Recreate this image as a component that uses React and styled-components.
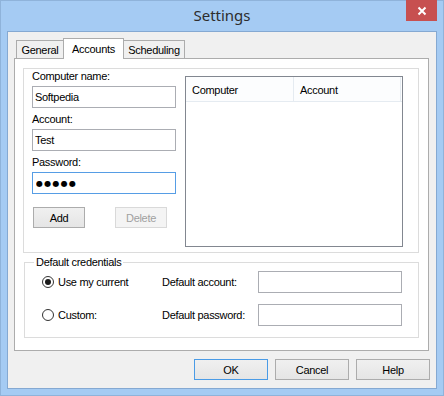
import React from "react";
import styled, { createGlobalStyle } from "styled-components";

const GlobalStyle = createGlobalStyle`
  html, body {
    margin: 0;
    padding: 0;
  }
  body {
    font-family: "Liberation Sans", Arial, sans-serif;
    font-size: 11px;
    letter-spacing: -0.3px;
    color: #000;
  }
`;

const Window = styled.div`
  width: 444px;
  height: 396px;
  box-sizing: border-box;
  background: #a5cbf3;
  border: 1px solid #8fb3da;
  display: flex;
  flex-direction: column;
`;

const TitleBar = styled.div`
  position: relative;
  height: 30px;
  display: flex;
  align-items: center;
  justify-content: center;
`;

const Title = styled.span`
  font-family: "Noto Sans", "Open Sans", sans-serif;
  font-size: 15px;
  letter-spacing: 0;
  color: #2d2d2d;
  margin-top: -2px;
`;

const CloseButton = styled.div`
  position: absolute;
  top: -1px;
  right: 6px;
  width: 31px;
  height: 21px;
  background: #c75050;
  display: flex;
  align-items: center;
  justify-content: center;
`;

const Client = styled.div`
  margin: 0 6px;
  height: 358px;
  box-sizing: border-box;
  border: 1px solid #85a9d2;
  background: #f0f0f0;
  padding: 6px 7px 0 6px;
  display: flex;
  flex-direction: column;
`;

const TabRow = styled.div`
  display: flex;
  align-items: flex-end;
  height: 20px;
  padding-left: 2px;
  position: relative;
  z-index: 1;
`;

const Tab = styled.div`
  width: ${(p) => p.$w}px;
  height: ${(p) => (p.$active ? 21 : 18)}px;
  margin-bottom: ${(p) => (p.$active ? -1 : 0)}px;
  margin-left: -1px;
  box-sizing: border-box;
  border: 1px solid #acacac;
  border-bottom: none;
  background: ${(p) => (p.$active ? "#fff" : "#f0f0f0")};
  text-align: center;
  line-height: 16px;
  padding-top: ${(p) => (p.$active ? 2 : 1)}px;
  &:first-child {
    margin-left: 0;
  }
`;

const Panel = styled.div`
  height: 293px;
  box-sizing: border-box;
  border: 1px solid #acacac;
  background: #fff;
  padding: 9px 9px 0 8px;
  display: flex;
  flex-direction: column;
`;

const AccountsGroup = styled.div`
  height: 185px;
  box-sizing: border-box;
  border: 1px solid #dcdcdc;
  padding: 7px 15px 0 8px;
  display: flex;
  gap: 9px;
  align-items: flex-start;
`;

const FieldColumn = styled.div`
  width: 144px;
  display: flex;
  flex-direction: column;
  margin-top: -7px;
`;

const Label = styled.label`
  display: block;
  line-height: 14px;
  margin: ${(p) => (p.$first ? 0 : 4)}px 0 3px;
  white-space: nowrap;
`;

const TextBox = styled.input`
  width: ${(p) => p.$w || 144}px;
  height: 22px;
  box-sizing: border-box;
  border: 1px solid ${(p) => (p.$focused ? "#569de5" : "#abadb3")};
  background: #fff;
  font-family: inherit;
  font-size: 11px;
  letter-spacing: -0.3px;
  padding: 0 2px;
  margin: 0;
  outline: none;
  color: #000;
`;

const PasswordBox = styled(TextBox)`
  font-family: "DejaVu Sans", sans-serif;
  font-size: 8px;
  letter-spacing: 1.3px;
  padding-left: 3px;
`;

const SmallButtons = styled.div`
  display: flex;
  gap: 30px;
  margin: 13px 0 0 1px;
`;

const Button = styled.button`
  width: ${(p) => p.$w}px;
  height: 21px;
  box-sizing: border-box;
  border: 1px solid ${(p) => (p.$default ? "#4a9be6" : p.disabled ? "#d9d9d9" : "#acacac")};
  background: ${(p) =>
    p.disabled ? "#f4f4f4" : "linear-gradient(#f0f0f0, #e5e5e5)"};
  color: ${(p) => (p.disabled ? "#a0a0a0" : "#000")};
  font-family: inherit;
  font-size: 11px;
  letter-spacing: -0.3px;
  padding: 0;
  margin: 0;
`;

const ListView = styled.div`
  width: 218px;
  height: 171px;
  box-sizing: border-box;
  border: 1px solid #828790;
  background: #fff;
`;

const ListHeader = styled.div`
  display: flex;
  height: 25px;
  box-sizing: border-box;
  border-bottom: 1px solid #e5ebf1;
  background: #fcfdfe;
`;

const Column = styled.div`
  width: ${(p) => p.$w}px;
  box-sizing: border-box;
  border-right: 1px solid #e5ebf1;
  padding: 6px 0 0 6px;
  line-height: 14px;
`;

const Credentials = styled.fieldset`
  height: 83px;
  box-sizing: border-box;
  margin: 2px 0 0 1px;
  padding: 2px 0 0 17px;
  border: 1px solid #dcdcdc;
  min-width: 0;
`;

const Legend = styled.legend`
  margin-left: -8px;
  padding: 0 2px;
  line-height: 14px;
`;

const CredGrid = styled.div`
  display: grid;
  grid-template-columns: 120px 96px 144px;
  grid-auto-rows: 22px;
  row-gap: 11px;
  align-items: center;
`;

const RadioLabel = styled.label`
  display: flex;
  align-items: center;
  gap: 4px;
  white-space: nowrap;
`;

const RadioCircle = styled.span`
  width: 12px;
  height: 12px;
  box-sizing: border-box;
  border-radius: 50%;
  border: 1px solid #333;
  background: #fff;
  display: flex;
  align-items: center;
  justify-content: center;
  margin-top: ${(p) => p.$dy || 0}px;
  &::after {
    content: "";
    width: 6px;
    height: 6px;
    border-radius: 50%;
    background: ${(p) => (p.$checked ? "#1a1a1a" : "transparent")};
  }
`;

const CredLabel = styled.span`
  white-space: nowrap;
  margin-top: ${(p) => p.$dy || 0}px;
`;

const Footer = styled.div`
  display: flex;
  justify-content: flex-end;
  gap: 7px;
  margin: 8px -1px 0 0;
`;

function Radio({ checked, children, dy }) {
  return (
    <RadioLabel>
      <RadioCircle $checked={checked} $dy={dy} />
      <CredLabel $dy={dy}>{children}</CredLabel>
    </RadioLabel>
  );
}

export default function App() {
  return (
    <>
      <GlobalStyle />
      <Window>
        <TitleBar>
          <Title>Settings</Title>
          <CloseButton>
            <svg width="10" height="10" viewBox="0 0 10 10">
              <path d="M1.5 1.5 L8.5 8.5 M8.5 1.5 L1.5 8.5" stroke="#fff" strokeWidth="2" />
            </svg>
          </CloseButton>
        </TitleBar>
        <Client>
          <TabRow>
            <Tab $w={48}>General</Tab>
            <Tab $w={61} $active>Accounts</Tab>
            <Tab $w={62}>Scheduling</Tab>
          </TabRow>
          <Panel>
            <AccountsGroup>
              <FieldColumn>
                <Label $first>Computer name:</Label>
                <TextBox readOnly defaultValue="Softpedia" />
                <Label>Account:</Label>
                <TextBox readOnly defaultValue="Test" />
                <Label>Password:</Label>
                <PasswordBox readOnly $focused defaultValue="●●●●●" />
                <SmallButtons>
                  <Button $w={52}>Add</Button>
                  <Button $w={52} disabled>Delete</Button>
                </SmallButtons>
              </FieldColumn>
              <ListView>
                <ListHeader>
                  <Column $w={108}>Computer</Column>
                  <Column $w={107}>Account</Column>
                </ListHeader>
              </ListView>
            </AccountsGroup>
            <Credentials>
              <Legend>Default credentials</Legend>
              <CredGrid>
                <Radio checked>Use my current</Radio>
                <CredLabel>Default account:</CredLabel>
                <TextBox readOnly defaultValue="" />
                <Radio dy={-1}>Custom:</Radio>
                <CredLabel>Default password:</CredLabel>
                <TextBox readOnly defaultValue="" />
              </CredGrid>
            </Credentials>
          </Panel>
          <Footer>
            <Button $w={74} $default>OK</Button>
            <Button $w={74}>Cancel</Button>
            <Button $w={74}>Help</Button>
          </Footer>
        </Client>
      </Window>
    </>
  );
}
